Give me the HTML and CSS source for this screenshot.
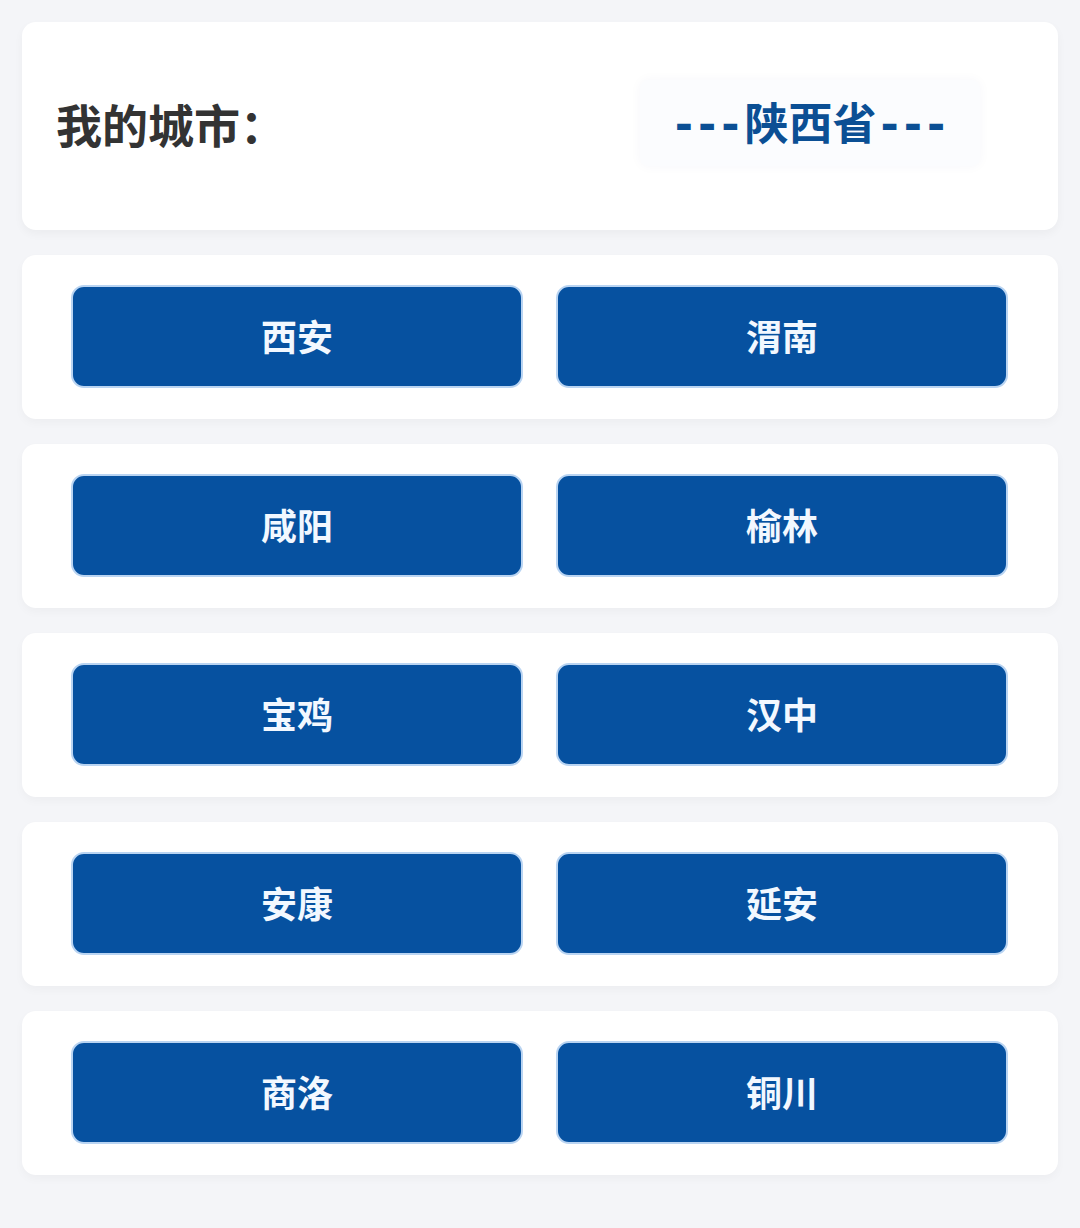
FILE: index.html
```html
<!DOCTYPE html>
<html lang="zh-CN">
<head>
    <meta charset="UTF-8">
    <meta name="viewport" content="width=device-width, initial-scale=1.0">
    <title>我的城市</title>
    <link rel="stylesheet" href="styles.css">
</head>
<body>
    <div class="page">
        <div class="header-card">
            <h1 class="header-title">我的城市：</h1>
            <div class="province-box">
                <span class="province-name"><span class="dash">---</span>陕西省<span class="dash dash-end">---</span></span>
            </div>
        </div>

        <div class="city-card">
            <button class="city-btn">西安</button>
            <button class="city-btn">渭南</button>
        </div>

        <div class="city-card">
            <button class="city-btn">咸阳</button>
            <button class="city-btn">榆林</button>
        </div>

        <div class="city-card">
            <button class="city-btn">宝鸡</button>
            <button class="city-btn">汉中</button>
        </div>

        <div class="city-card">
            <button class="city-btn">安康</button>
            <button class="city-btn">延安</button>
        </div>

        <div class="city-card">
            <button class="city-btn">商洛</button>
            <button class="city-btn">铜川</button>
        </div>
    </div>
</body>
</html>
```

FILE: styles.css
```css
* {
    margin: 0;
    padding: 0;
    box-sizing: border-box;
    font-family: "Noto Sans CJK SC", "Noto Sans", sans-serif;
}

html, body {
    width: 100%;
    height: 100%;
}

body {
    background: #f4f5f8;
    color: #333333;
}

.page {
    display: flex;
    flex-direction: column;
    gap: 25px;
    padding: 22px;
}

.header-card {
    height: 208px;
    display: flex;
    align-items: center;
    justify-content: space-between;
    padding: 0 78px 0 34px;
    background: #ffffff;
    border-radius: 14px;
    box-shadow: 0 4px 10px rgba(0, 0, 0, 0.04);
}

.header-title {
    font-size: 46px;
    font-weight: 700;
    color: #333333;
    line-height: 1;
    margin-top: -6px;
    white-space: nowrap;
}

.province-box {
    width: 340px;
    height: 86px;
    display: flex;
    align-items: center;
    justify-content: center;
    background: #fbfcfe;
    border-radius: 8px;
    box-shadow: 0 0 12px rgba(20, 60, 120, 0.04);
    margin-top: -6px;
}

.province-name {
    font-size: 44px;
    font-weight: 700;
    color: #0b4f94;
    line-height: 1;
    white-space: nowrap;
}

.dash {
    font-family: "DejaVu Sans", sans-serif;
    letter-spacing: 5px;
}

.dash-end {
    margin-left: 4px;
    margin-right: -5px;
}

.city-card {
    height: 164px;
    display: grid;
    grid-template-columns: 1fr 1fr;
    gap: 33px;
    padding: 30px 50px 31px 49px;
    background: #ffffff;
    border-radius: 14px;
    box-shadow: 0 4px 10px rgba(0, 0, 0, 0.03);
}

.city-btn {
    display: flex;
    align-items: center;
    justify-content: center;
    padding-bottom: 4px;
    background: #0651a0;
    border: 2px solid #b9d4f2;
    border-radius: 13px;
    color: #f2f8ff;
    font-size: 36px;
    font-weight: 700;
    cursor: pointer;
}
```
